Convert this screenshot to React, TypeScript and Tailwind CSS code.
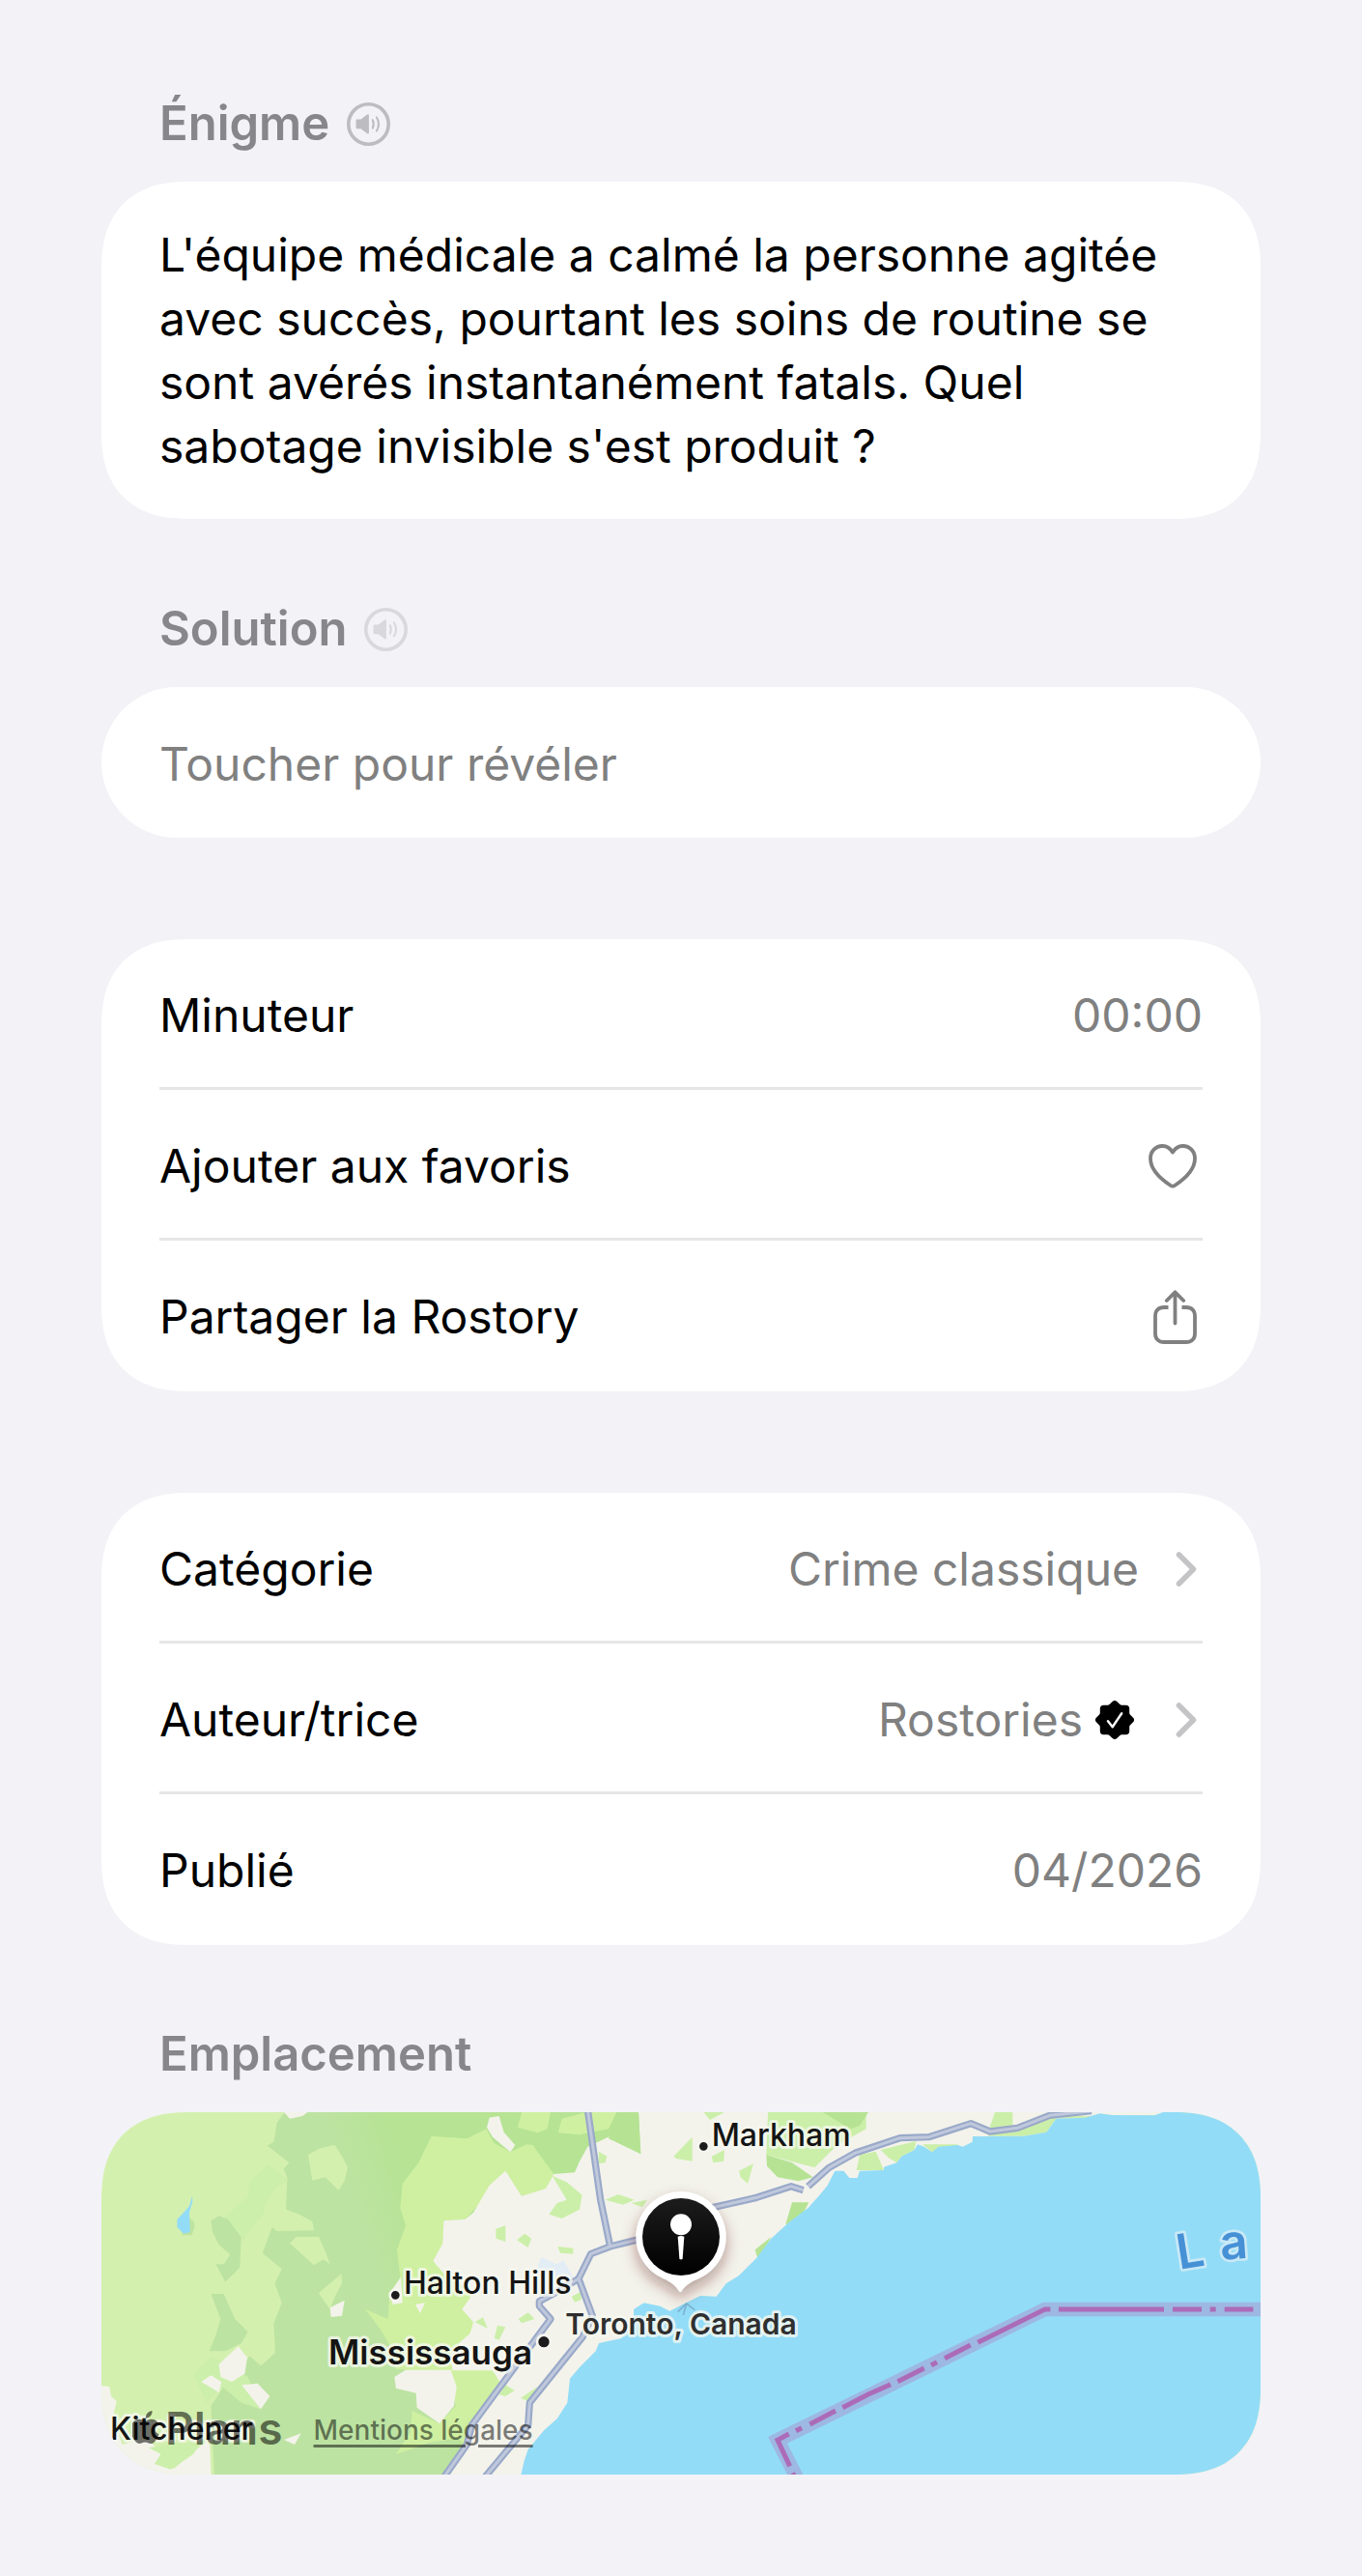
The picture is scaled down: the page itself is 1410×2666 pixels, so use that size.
import type { ReactNode } from "react";

const CARD = "rounded-[78px] overflow-hidden bg-white";
const SMOOTH = "supports-[corner-shape:squircle]:rounded-[90px] [corner-shape:superellipse(1.25)]";
const ROW = "flex min-h-[156px] w-full items-center justify-between border-b-[3px] pt-1 text-left";

function SpeakerIcon() {
  return (
    <svg viewBox="0 0 45 45" className="size-[45px]" fill="none" stroke="currentColor" aria-hidden="true">
      <circle cx="22.5" cy="22.5" r="20.7" strokeWidth="3.6" />
      <path
        d="M11 17.6h3.6l6.6-5.1c.8-.6 1.7-.2 1.7.8v18.2c0 1-.9 1.4-1.7.8l-6.6-5.1H11c-.9 0-1.500-.6-1.500-1.500v-6.600c0-.9.6-1.500 1.500-1.500z"
        fill="currentColor"
        stroke="none"
      />
      <path d="M26.8 18.2c1.3 2.7 1.3 5.6 0 8.4M30.9 15.4c2.7 4.5 2.7 9.5 0 14" strokeWidth="2" strokeLinecap="round" />
    </svg>
  );
}

function HeartIcon() {
  return (
    <svg viewBox="0 0 50 46" className="h-[46px] w-[50px]" fill="none" stroke="currentColor" strokeWidth="3.8" strokeLinejoin="round" aria-hidden="true">
      <path d="M25 8.6C22.600 4.400 18.800 2 14.500 2 7.500 2 2 7.400 2 15c0 10 8.500 19.800 21 28 1.500 1 2.500 1 4 0C39.500 34.800 48 25 48 15 48 7.400 42.500 2 35.500 2 31.200 2 27.400 4.400 25 8.600z" />
    </svg>
  );
}

function ShareIcon() {
  return (
    <svg viewBox="0 0 45 56" className="h-[56px] w-[45px]" fill="none" stroke="currentColor" strokeWidth="3.8" aria-hidden="true">
      <path d="M15.500 18H11c-5.500 0-9 3.300-9 8.800v18.400C2 50.700 5.500 54 11 54h23c5.500 0 9-3.300 9-8.800V26.800C43 21.300 39.500 18 34 18h-4.500" />
      <path d="M22.500 34.500V2.500M13.800 11l8.700-8.700L31.200 11" strokeLinecap="round" strokeLinejoin="round" />
    </svg>
  );
}

function ChevronIcon() {
  return (
    <svg viewBox="0 0 22 38" className="h-[38px] w-[22px] text-[#c4c4c7]" fill="none" stroke="currentColor" strokeWidth="5.6" strokeLinecap="round" strokeLinejoin="round" aria-hidden="true">
      <path d="M3.500 4 18.500 19 3.500 34" />
    </svg>
  );
}

function VerifiedIcon() {
  return (
    <svg viewBox="0 0 42 42" className="size-[42px]" role="img" aria-label="Compte vérifié">
      <path
        d="M18.700 1.900c1.300-1.300 3.300-1.300 4.600 0l3.200 3.200c.5.500 1.100.7 1.800.7h4.400c2 0 3.500 1.500 3.500 3.500v4.400c0 .7.300 1.300.7 1.800l3.200 3.200c1.300 1.300 1.300 3.300 0 4.600l-3.200 3.200c-.5.500-.7 1.100-.7 1.800v4.400c0 2-1.500 3.500-3.500 3.500h-4.400c-.7 0-1.300.3-1.800.7l-3.200 3.200c-1.300 1.300-3.300 1.300-4.600 0l-3.200-3.200c-.5-.5-1.100-.7-1.800-.7H9.300c-2 0-3.500-1.500-3.500-3.500v-4.400c0-.7-.3-1.300-.7-1.800l-3.200-3.200c-1.300-1.300-1.300-3.300 0-4.600l3.200-3.200c.5-.5.7-1.100.7-1.800V9.300c0-2 1.500-3.500 3.500-3.500h4.400c.7 0 1.300-.3 1.800-.7z"
        fill="#000"
      />
      <path d="M14 22.300 18.700 28.200 28.200 14.300" fill="none" stroke="#fff" strokeWidth="2.400" strokeLinecap="round" strokeLinejoin="round" />
    </svg>
  );
}

function AppleIcon() {
  return (
    <svg viewBox="0 0 28 36" className="h-[36px] w-[28px]" fill="currentColor" aria-hidden="true">
      <path d="M20.500 0c.3 2-.5 3.900-1.700 5.300-1.200 1.500-3.100 2.500-4.900 2.400-.3-1.900.6-3.900 1.700-5.200C16.900 1.100 18.900.1 20.500 0z" />
      <path d="M26.600 12.400c-2 1.200-3.300 3.100-3.300 5.700 0 2.900 1.700 5.200 4.200 6.200-.6 1.800-1.500 3.500-2.600 5.100-1.600 2.300-3.200 4.600-5.700 4.600-2.400.1-3.200-1.400-6-1.400s-3.600 1.400-5.900 1.500c-2.400.1-4.300-2.500-5.900-4.800C-1.800 24.600-3.200 16.700.8 11.800 2.300 9.900 4.700 8.700 7.200 8.700c2.400 0 4.600 1.600 6.100 1.600 1.400 0 4.100-1.900 7-1.600 1.900.1 4.700.8 6.300 3.700z" />
    </svg>
  );
}

function SectionTitle({ children, action }: { children: ReactNode; action?: ReactNode }) {
  return (
    <div className="flex items-center gap-[18px] px-[60px] pb-[27px]">
      <h2 className="text-[49px] font-semibold leading-[66px] text-[#86868b]">{children}</h2>
      {action}
    </div>
  );
}

const FOREST =
  "M-316 48-340 80-350 140-370 152-302 205-320 225-308 250-312 350-270 365-230 388-225 415-340 417-355 405-385 485-325 535-347 580-325 640-350 705-345 795-390 835-425 805-450 840-460 875-500 885-515 915-545 960-535 1173H800V48z";

const COAST =
  "M2412 48 2385 58 2255 57 2215 52 2170 65 2080 68 2050 110 1980 122 1821 123 1820 140 1790 155 1775 150 1715 155 1695 172 1670 155 1650 148 1640 165 1600 185 1585 205 1545 218 1545 228 1470 230 1463 252 1438 252 1420 230 1393 230 1370 275 1350 300 1310 345 1250 390 1195 440 1150 500 1095 555 1055 580 1025 620 975 618 930 640 880 665 850 650 800 640 768 660 768 700 730 750 660 765 650 790 600 840 570 875 562 950 530 1000 490 1035 440 1095 428 1130 418 1173H2715V48z";

const ROADS = [
  "M625 40 665 320 695 465",
  "M915 420 775 445 695 465 635 488 597 565 640 680 610 745 445 950 440 1020 305 1182",
  "M1000 347 1150 313 1257 278 1295 290",
  "M1310 278 1375 220 1455 175 1595 128 1685 125 1815 83 1875 108 1960 97 2060 58 2190 44",
  "M597 565 530 605 475 635 475 650 510 690 365 885 350 905 265 1020 250 1080 178 1182",
];

const BORDER_DASHES =
  "M2603 660H2692M2558 660H2576M2442 660H2532M2088 660H2415M2062 660H2045L1837 763M1814 771 1734 812M1710 824 1692 833M1670 843 1588 884M1566 893 1495 925 1417 965M1395 975 1315 1017M1290 1028 1272 1037M1250 1047 1215 1066 1253 1147M1262 1168 1270 1184";

function MapDrawing() {
  return (
    <svg
      viewBox="-885 48 3600 1125"
      preserveAspectRatio="xMidYMid slice"
      className="block h-[375px] w-full font-['Inter',sans-serif]"
      role="img"
      aria-label="Carte de Toronto, Canada"
    >
      <defs>
        <linearGradient id="forest" gradientUnits="userSpaceOnUse" x1="-120" y1="300" x2="60" y2="240">
          <stop offset="0" stopColor="#bde3a2" />
          <stop offset="1" stopColor="#b6e394" />
        </linearGradient>
        <linearGradient id="pin" x1="0" y1="0" x2="0" y2="1">
          <stop offset="0" stopColor="#1c1c1c" />
          <stop offset="1" stopColor="#000" />
        </linearGradient>
        <filter id="pin-shadow" x="-50%" y="-50%" width="200%" height="200%">
          <feDropShadow dx="0" dy="22" stdDeviation="22" floodColor="#5b1f1f" floodOpacity="0.4" />
        </filter>
      </defs>

      {/* Land */}
      <rect x="-885" y="48" width="3600" height="1125" fill="#d4f0af" />
      <path d={FOREST} fill="url(#forest)" />
      <g fill="#bde3a2">
        <path d="M-545 385-520 370-490 380-450 420-455 530-500 575-530 520-505 520-485 490-520 460-540 420z" />
        <path d="M-545 612H-505L-470 690-430 730-450 765-500 790-550 790-530 740-515 690z" />
        <path d="M-620 370-600 385-595 405-605 430-635 430z" />
      </g>
      <g fill="#ccefab">
        <path d="M-365 210-305 260-345 285-375 335-385 370-435 430-440 450-500 370-430 310-425 260z" />
        <path d="M-600 860-545 805-515 820-430 870-390 970-450 950-510 900-560 950z" />
      </g>
      <path d="M-603 308-612 340-635 365-650 380-650 405-630 425-610 420-612 360-602 325z" fill="#93dcf7" />
      <g fill="#d4f0af">
        <path d="M-243 180-205 160-160 150-135 190-120 220-130 260-148 290-190 250-230 260z" />
        <path d="M-300 455-280 435-210 435-190 480-175 520-195 505-225 523z" />
        <path d="M-210 610-140 550-138 580-160 620-175 660z" />
      </g>

      {/* Farmland and parks around the city */}
      <path
        d="M310 100 250 130 140 122 100 205 50 270 43 345 60 400 33 475 43 560 10 615 5 690-65 660-20 720 10 770 30 845 200 860 215 960 165 1015 80 975 75 1040 30 1110 130 1075 220 1060 250 1085 450 880 440 760 270 620 145 510 178 455V385L245 380 320 300 370 230 420 308 495 285 520 240 480 185 455 150 435 148 385 172 335 145z"
        fill="#cff0a1"
      />
      <path
        d="M783 48 790 178 700 120 625 155 600 200 585 235 520 240 495 285 420 308 370 230 320 275 270 360 245 380 178 385 175 455 145 510 175 545 270 610 235 660 270 700 260 735 225 765 200 800 205 850 330 850 355 890 265 1020 250 1085 195 1173H1500L2450 48z"
        fill="#f3f3eb"
      />
      <g fill="#f3f3eb">
        <path d="M25 870 60 848 200 848 218 900 210 960 165 1015 95 965 92 920 30 905z" />
        <path d="M320 65 350 60 365 110 400 150 385 172 330 125 312 95z" />
        <path d="M-318 48H-245L-260 60-300 68z" />
        <path d="M-520 830-460 775-432 810-440 860-480 885-515 870z" />
        <path d="M-575 885-545 865-512 885-520 918z" />
        <path d="M-450 895-400 890-362 930-390 970z" />
        <path d="M-175 655-130 632-138 680-172 684z" />
        <path d="M-318 1065-265 1045-285 1080z" />
        <path d="M-885 898-860 900-855 930-838 945-850 1000-820 1080-740 1060-700 1110-720 1140-660 1155-560 1070-548 1080-545 1173H-885z" />
        <path d="M90 645 120 640 105 672z" />
        <path d="M10 610 45 560 50 640 20 645z" />
      </g>
      <path d="M-738 1090-640 1075-575 1070-600 1110-670 1157-720 1140-700 1110z" fill="#ccefab" />
      <g fill="#cbefa9">
        <path d="M515 245 560 265 608 305 600 350 545 378 505 365 530 330 560 320z" />
        <path d="M340 410 370 400 370 450 340 440z" />
        <path d="M405 445 430 425 450 440 440 468z" />
        <path d="M532 465 580 470 580 488 540 485z" />
        <path d="M660 170 685 185 680 205 658 208z" />
        <path d="M680 320 720 303 770 320 735 335z" />
        <path d="M760 330 810 320 795 343z" />
        <path d="M892 185 950 125V200L900 192z" />
        <path d="M1010 185 1050 165 1048 200 1015 205z" />
        <path d="M1095 230 1140 208 1122 270 1100 250z" />
        <path d="M410 690 440 670 460 690 420 703z" />
        <path d="M275 700 300 685 315 720z" />
        <path d="M335 750 345 710 370 715 350 755z" />
        <path d="M370 895 398 912 370 930 350 925z" />
        <path d="M417 935 470 900 440 945z" />
        <path d="M575 620 605 605V630L585 638z" />
        <path d="M1535 165 1645 138 1640 165 1600 185 1585 205 1560 190z" />
        <path d="M1470 180 1520 170 1545 228 1460 228z" />
        <path d="M1665 148H1775V155L1695 172z" />
        <path d="M1870 105 1890 48H1945V100L2090 60H2412V58H2255L2170 65 2080 68 2050 110 1980 122H1870z" />
        <path d="M985 48H1050L1005 72z" />
        <path d="M1185 48H1490V100L1400 150 1330 220 1180 180z" />
      </g>
      <g fill="#cff0a1">
        <path d="M420 48H510L500 100 470 112 408 95z" />
        <path d="M545 68 620 48H715L690 100 600 118 533 112z" />
      </g>
      <g fill="#b6e393">
        <path d="M715 48H783L790 178 690 130 700 80z" />
        <path d="M1180 180 1260 205 1325 250 1280 262 1215 250 1182 215z" />
        <path d="M1355 48H1497L1470 90 1440 100z" />
        <path d="M1260 328H1312L1275 400 1240 395z" />
        <path d="M1145 475 1195 435 1155 510z" />
      </g>
      <path d="M470 530 480 498 530 520 550 508 580 560 560 600 500 560z" fill="#e3edf6" />

      {/* Lake Ontario */}
      <path d={COAST} fill="#93dcf7" />

      {/* Highways */}
      <g fill="none" strokeLinejoin="round">
        {ROADS.map((d) => (
          <path key={d} d={d} stroke="#9aa9c9" strokeWidth="22" />
        ))}
        {ROADS.map((d) => (
          <path key={d} d={d} stroke="#c0c9dc" strokeWidth="9" />
        ))}
      </g>

      {/* US border */}
      <g fill="none">
        <path d="M2725 660H2045L1215 1066 1275 1184" stroke="#9db8e2" strokeWidth="44" />
        <path d={BORDER_DASHES} stroke="#ac6bb8" strokeWidth="15" />
      </g>
      <path d="M905 668 932 642 958 662M932 642 922 678" fill="none" stroke="#7ab4d4" strokeWidth="5" />

      {/* Place names */}
      <g fill="#1c1c1c" stroke="#f6f6f0">
        <circle cx="985" cy="154" r="17" strokeWidth="8" />
        <circle cx="28" cy="616" r="17" strokeWidth="8" />
        <circle cx="489" cy="761" r="21" strokeWidth="8" />
      </g>
      <g fill="#141414" stroke="#f6f8f0" strokeWidth="18" strokeOpacity="0.8" strokeLinejoin="round" style={{ paintOrder: "stroke" }} fontWeight="500" fontSize="96">
        <text x="1010" y="153">Markham</text>
        <text x="54" y="612">Halton Hills</text>
        <text x="-858" y="1065">Kitchener</text>
        <text x="-180" y="830" fontSize="105" fontWeight="600">Mississauga</text>
        <text x="915" y="738" fontSize="90" fontWeight="600" fill="#2f2f2f" textAnchor="middle">Toronto, Canada</text>
      </g>
      <g fill="#4690d6" stroke="#c9e9f6" strokeWidth="16" strokeLinejoin="round" style={{ paintOrder: "stroke" }} fontWeight="600" fontSize="150">
        <text transform="translate(2462 536) rotate(-9)">L</text>
        <text transform="translate(2592 506) rotate(-4)">a</text>
      </g>

      {/* Marker */}
      <g filter="url(#pin-shadow)">
        <path d="M915 294a141 141 0 0 1 56 270c-28 11-44 24-54 39-2 4-6 4-8 0-10-15-26-29-50-39A141 141 0 0 1 915 294z" fill="#fff" />
      </g>
      <circle cx="915" cy="435" r="120" fill="url(#pin)" />
      <circle cx="915" cy="397" r="33" fill="#fff" />
      <path d="M905 434q10-4 20 0l-5 68q-5 7-10 0z" fill="#fff" />
    </svg>
  );
}

export default function App() {
  return (
    <main className="min-h-screen bg-[#f2f2f7] px-[105px] pb-[105px] pt-[95px] font-['Inter',sans-serif] text-[48px] leading-[66px] text-black">
      <section>
        <SectionTitle
          action={
            <button type="button" aria-label="Écouter l'énigme" className="text-[#bcbcc1]">
              <SpeakerIcon />
            </button>
          }
        >
          Énigme
        </SectionTitle>
        <div className={`${CARD} ${SMOOTH} px-[60px] pb-[42px] pt-[43px]`}>
          <p>
            L'équipe médicale a calmé la personne agitée avec succès, pourtant les soins de routine se sont avérés
            instantanément fatals. Quel sabotage invisible s'est produit ?
          </p>
        </div>
      </section>

      <section className="mt-[81px]">
        <SectionTitle
          action={
            <button type="button" aria-label="Écouter la solution" className="text-[#d8d8dd]">
              <SpeakerIcon />
            </button>
          }
        >
          Solution
        </SectionTitle>
        <button type="button" className={`${CARD} block min-h-[156px] w-full px-[60px] pt-1 text-left text-[#808080]`}>
          Toucher pour révéler
        </button>
      </section>

      <section className={`${CARD} ${SMOOTH} mt-[105px] px-[60px]`}>
        <div className={`${ROW} border-[#e6e6e6]`}>
          <span>Minuteur</span>
          <span className="text-[#808080]">00:00</span>
        </div>
        <button type="button" className={`${ROW} border-[#e6e6e6]`}>
          <span>Ajouter aux favoris</span>
          <span className="pr-1.5 text-[#808080]">
            <HeartIcon />
          </span>
        </button>
        <button type="button" className={`${ROW} border-transparent`}>
          <span>Partager la Rostory</span>
          <span className="pr-1.5 text-[#808080]">
            <ShareIcon />
          </span>
        </button>
      </section>

      <section className={`${CARD} ${SMOOTH} mt-[105px] px-[60px]`}>
        <a href="#categorie" className={`${ROW} border-[#e6e6e6]`}>
          <span>Catégorie</span>
          <span className="flex items-center gap-[38px] pr-1.5 text-[#808080]">
            Crime classique
            <ChevronIcon />
          </span>
        </a>
        <a href="#auteur" className={`${ROW} border-[#e6e6e6]`}>
          <span>Auteur/trice</span>
          <span className="flex items-center gap-[42px] pr-1.5 text-[#808080]">
            <span className="flex items-center gap-3">
              Rostories
              <VerifiedIcon />
            </span>
            <ChevronIcon />
          </span>
        </a>
        <div className={`${ROW} border-transparent`}>
          <span>Publié</span>
          <span className="text-[#808080]">04/2026</span>
        </div>
      </section>

      <section className="mt-20">
        <SectionTitle>Emplacement</SectionTitle>
        <div className={`${CARD} ${SMOOTH} relative`}>
          <MapDrawing />
          <div className="absolute bottom-[22px] left-8 flex items-end gap-8">
            <span className="flex items-center gap-1.5 text-[46px] font-semibold leading-[52px] text-black/55">
              <AppleIcon />
              Plans
            </span>
            <a href="#mentions" className="pb-1.5 text-[28px] font-medium leading-[36px] text-black/50 underline decoration-[3px] underline-offset-[5px]">
              Mentions légales
            </a>
          </div>
        </div>
      </section>
    </main>
  );
}
